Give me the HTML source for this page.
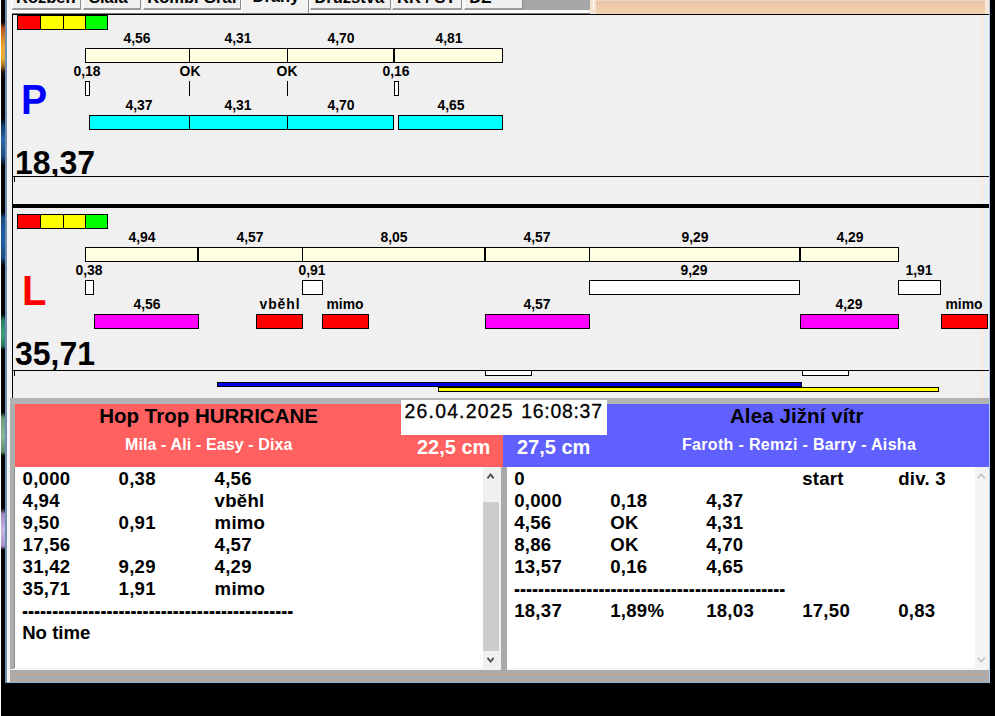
<!DOCTYPE html>
<html lang="cs">
<head>
<meta charset="utf-8">
<title>Flyball - Dráhy</title>
<style>
html,body{margin:0;padding:0;}
body{width:995px;height:716px;overflow:hidden;background:#000;position:relative;
 font-family:"Liberation Sans",sans-serif;font-weight:bold;}
div,span{position:absolute;box-sizing:border-box;}
.t{white-space:pre;}
.bar{border:1px solid #000;}
.tab{top:-6px;height:15.5px;background:#f0f0f0;border-right:1px solid #8c8c8c;border-bottom:2px solid #9a9a9a;border-left:1px solid #fff;}
</style>
</head>
<body>

<div style="left:0px;top:0px;width:1px;height:716px;background:#fff;"></div>
<div style="left:1px;top:0px;width:4px;height:683px;background:linear-gradient(180deg,#000 0px,#000 22px,#3a1408 24px,#b05020 28px,#d07828 36px,#e8a030 44px,#e8b038 58px,#a07020 66px,#201008 72px,#000 80px,#000 118px,#103a68 126px,#2868a8 140px,#1a4a80 156px,#000 166px,#000 212px,#184a88 218px,#2060a0 240px,#184a80 258px,#000 266px,#000 314px,#2a7a68 320px,#40a078 334px,#2a7060 346px,#000 350px,#000 412px,#6a9a7a 418px,#88b898 436px,#5a8a6a 452px,#000 456px,#000 508px,#a088c8 514px,#c8b8e0 530px,#a890c8 546px,#000 550px,#000 683px);"></div>
<div style="left:5px;top:0px;width:2px;height:683px;background:#6f8fb4;"></div>
<div style="left:7px;top:0px;width:983px;height:683px;background:#f4f4f4;"></div>
<div style="left:5px;top:669px;width:985px;height:14px;background:linear-gradient(180deg,#f4f4f4 0,#f4f4f4 1px,#a9abad 1px,#a9abad 4px,#b5a89c 4px,#b5a89c 7px,#a8acb0 7px,#a8acb0 10px,#b3aaa0 10px,#b3aaa0 12.5px,#8fb4d8 12.5px,#8fb4d8 14px);"></div>
<div style="left:5px;top:669px;width:2px;height:14px;background:#6f8fb4;"></div>
<div style="left:7px;top:669px;width:3px;height:13px;background:#f4f4f4;"></div>
<div style="left:990px;top:0px;width:5px;height:716px;background:#000;"></div>
<div style="left:7px;top:0px;width:583px;height:10px;background:#f6f6f6;"></div>
<div style="left:7px;top:10px;width:983px;height:3px;background:#fbfbfb;"></div>
<div style="left:522px;top:0px;width:68px;height:10px;background:#a6a6a6;"></div>
<div style="left:590px;top:0px;width:6px;height:13px;background:#f6e2cc;"></div>
<div style="left:593px;top:0px;width:1px;height:10px;background:#fff;"></div>
<div style="left:596px;top:0px;width:394px;height:14px;background:linear-gradient(180deg,#f6e6d8 0,#e6c4a8 1.2px,#efcdac 7px,#f3d2b0 14px);"></div>
<div style="left:985px;top:0px;width:4px;height:14px;background:#f7e6d6;"></div>
<div class="tab" style="left:12px;width:69px;"></div>
<span class="t" style="top:-11px;font-size:16.5px;line-height:16.5px;color:#000;left:45.8px;transform:translateX(-50%);transform-origin:50% 0;">Rozběh</span>
<div class="tab" style="left:83px;width:58px;"></div>
<span class="t" style="top:-11px;font-size:16.5px;line-height:16.5px;color:#000;left:108.3px;transform:translateX(-50%);transform-origin:50% 0;">Siala</span>
<div class="tab" style="left:143px;width:98px;"></div>
<span class="t" style="top:-11px;font-size:16.5px;line-height:16.5px;color:#000;left:192.2px;transform:translateX(-50%);transform-origin:50% 0;">Kombi Graf</span>
<div class="tab" style="left:310px;width:81px;"></div>
<span class="t" style="top:-11px;font-size:16.5px;line-height:16.5px;color:#000;left:349.3px;transform:translateX(-50%);transform-origin:50% 0;">Družstva</span>
<div class="tab" style="left:392px;width:70px;"></div>
<span class="t" style="top:-11px;font-size:16.5px;line-height:16.5px;color:#000;left:426.3px;transform:translateX(-50%);transform-origin:50% 0;">KK / ST</span>
<div class="tab" style="left:464px;width:59px;"></div>
<span class="t" style="top:-11px;font-size:16.5px;line-height:16.5px;color:#000;left:480.3px;transform:translateX(-50%);transform-origin:50% 0;">DZ</span>
<div style="left:241px;top:-6px;width:68px;height:19px;background:#f2f2f2;border-left:1px solid #fff;border-right:1px solid #8c8c8c;"></div>
<span class="t" style="top:-12.4px;font-size:16.5px;line-height:16.5px;color:#000;left:276px;transform:translateX(-50%);transform-origin:50% 0;">Dráhy</span>
<div style="left:7px;top:13px;width:5px;height:1px;background:#fbfbfb;"></div>
<div style="left:12px;top:13px;width:578px;height:1px;background:#7a7a7a;"></div>
<div style="left:12px;top:14px;width:978px;height:384px;background:#f0f0f0;"></div>
<div style="left:981px;top:15px;width:3px;height:383px;background:#f5ece4;"></div>
<div style="left:984px;top:15px;width:3px;height:383px;background:#e6f0fa;"></div>
<div style="left:987px;top:15px;width:3px;height:383px;background:#f6eee8;"></div>
<div style="left:12px;top:14px;width:978px;height:1px;background:#000;"></div>
<div style="left:12px;top:14px;width:1px;height:384px;background:#000;"></div>
<div style="left:12px;top:176px;width:978px;height:1px;background:#000;"></div>
<div style="left:14px;top:177px;width:1px;height:5px;background:#000;"></div>
<div style="left:12px;top:204px;width:978px;height:4px;background:#000;"></div>
<div style="left:12px;top:370px;width:978px;height:1px;background:#000;"></div>
<div style="left:14px;top:371px;width:1px;height:5px;background:#000;"></div>
<div class="bar" style="left:17px;top:15px;width:24px;height:15px;background:#ff0000"></div>
<div class="bar" style="left:40px;top:15px;width:24px;height:15px;background:#ffff00"></div>
<div class="bar" style="left:63px;top:15px;width:23px;height:15px;background:#ffff00"></div>
<div class="bar" style="left:85px;top:15px;width:23px;height:15px;background:#00ff00"></div>
<div class="bar" style="left:85px;top:48px;width:418px;height:15px;background:#ffffe1"></div>
<span class="t" style="top:30px;font-size:15.2px;line-height:15.2px;color:#000;left:137.0px;transform:translateX(-50%) scaleX(0.915);transform-origin:50% 0;">4,56</span>
<span class="t" style="top:30px;font-size:15.2px;line-height:15.2px;color:#000;left:238.0px;transform:translateX(-50%) scaleX(0.915);transform-origin:50% 0;">4,31</span>
<span class="t" style="top:30px;font-size:15.2px;line-height:15.2px;color:#000;left:340.5px;transform:translateX(-50%) scaleX(0.915);transform-origin:50% 0;">4,70</span>
<span class="t" style="top:30px;font-size:15.2px;line-height:15.2px;color:#000;left:448.5px;transform:translateX(-50%) scaleX(0.915);transform-origin:50% 0;">4,81</span>
<div style="left:189px;top:48px;width:1px;height:15px;background:#000;"></div>
<div style="left:287px;top:48px;width:1px;height:15px;background:#000;"></div>
<div style="left:393px;top:48px;width:2px;height:15px;background:#000;"></div>
<span class="t" style="top:63px;font-size:15.2px;line-height:15.2px;color:#000;left:87px;transform:translateX(-50%) scaleX(0.915);transform-origin:50% 0;">0,18</span>
<span class="t" style="top:63px;font-size:15.2px;line-height:15.2px;color:#000;left:189.5px;transform:translateX(-50%) scaleX(0.915);transform-origin:50% 0;">OK</span>
<span class="t" style="top:63px;font-size:15.2px;line-height:15.2px;color:#000;left:287px;transform:translateX(-50%) scaleX(0.915);transform-origin:50% 0;">OK</span>
<span class="t" style="top:63px;font-size:15.2px;line-height:15.2px;color:#000;left:396.3px;transform:translateX(-50%) scaleX(0.915);transform-origin:50% 0;">0,16</span>
<div class="bar" style="left:85px;top:81px;width:5px;height:15px;background:#fff"></div>
<div style="left:189px;top:81px;width:1px;height:15px;background:#000;"></div>
<div style="left:287px;top:81px;width:1px;height:15px;background:#000;"></div>
<div class="bar" style="left:394px;top:81px;width:5px;height:15px;background:#fff"></div>
<div class="bar" style="left:89px;top:115px;width:305px;height:15px;background:#00ffff"></div>
<div style="left:189px;top:115px;width:1px;height:15px;background:#000;"></div>
<div style="left:287px;top:115px;width:1px;height:15px;background:#000;"></div>
<div class="bar" style="left:398px;top:115px;width:105px;height:15px;background:#00ffff"></div>
<span class="t" style="top:97px;font-size:15.2px;line-height:15.2px;color:#000;left:139px;transform:translateX(-50%) scaleX(0.915);transform-origin:50% 0;">4,37</span>
<span class="t" style="top:97px;font-size:15.2px;line-height:15.2px;color:#000;left:238px;transform:translateX(-50%) scaleX(0.915);transform-origin:50% 0;">4,31</span>
<span class="t" style="top:97px;font-size:15.2px;line-height:15.2px;color:#000;left:340.5px;transform:translateX(-50%) scaleX(0.915);transform-origin:50% 0;">4,70</span>
<span class="t" style="top:97px;font-size:15.2px;line-height:15.2px;color:#000;left:450.5px;transform:translateX(-50%) scaleX(0.915);transform-origin:50% 0;">4,65</span>
<span class="t" style="top:78px;font-size:43px;line-height:43px;color:#0000ff;left:20.8px;transform:scaleX(0.91);transform-origin:0 0;">P</span>
<div style="left:13px;top:140px;width:300px;height:36px;overflow:hidden;">
<span class="t" style="top:5px;font-size:34px;line-height:34px;color:#000;left:2.4px;transform:scaleX(0.94);transform-origin:0 0;">18,37</span>
</div>
<div class="bar" style="left:17px;top:214px;width:24px;height:15px;background:#ff0000"></div>
<div class="bar" style="left:40px;top:214px;width:24px;height:15px;background:#ffff00"></div>
<div class="bar" style="left:63px;top:214px;width:23px;height:15px;background:#ffff00"></div>
<div class="bar" style="left:85px;top:214px;width:23px;height:15px;background:#00ff00"></div>
<div class="bar" style="left:85px;top:247px;width:814px;height:15px;background:#ffffe1"></div>
<span class="t" style="top:229px;font-size:15.2px;line-height:15.2px;color:#000;left:141.5px;transform:translateX(-50%) scaleX(0.915);transform-origin:50% 0;">4,94</span>
<span class="t" style="top:229px;font-size:15.2px;line-height:15.2px;color:#000;left:250.0px;transform:translateX(-50%) scaleX(0.915);transform-origin:50% 0;">4,57</span>
<span class="t" style="top:229px;font-size:15.2px;line-height:15.2px;color:#000;left:393.5px;transform:translateX(-50%) scaleX(0.915);transform-origin:50% 0;">8,05</span>
<span class="t" style="top:229px;font-size:15.2px;line-height:15.2px;color:#000;left:537.0px;transform:translateX(-50%) scaleX(0.915);transform-origin:50% 0;">4,57</span>
<span class="t" style="top:229px;font-size:15.2px;line-height:15.2px;color:#000;left:694.5px;transform:translateX(-50%) scaleX(0.915);transform-origin:50% 0;">9,29</span>
<span class="t" style="top:229px;font-size:15.2px;line-height:15.2px;color:#000;left:849.5px;transform:translateX(-50%) scaleX(0.915);transform-origin:50% 0;">4,29</span>
<div style="left:197px;top:247px;width:2px;height:15px;background:#000;"></div>
<div style="left:302px;top:247px;width:1px;height:15px;background:#000;"></div>
<div style="left:484px;top:247px;width:2px;height:15px;background:#000;"></div>
<div style="left:589px;top:247px;width:1px;height:15px;background:#000;"></div>
<div style="left:799px;top:247px;width:2px;height:15px;background:#000;"></div>
<span class="t" style="top:262px;font-size:15.2px;line-height:15.2px;color:#000;left:89px;transform:translateX(-50%) scaleX(0.915);transform-origin:50% 0;">0,38</span>
<span class="t" style="top:262px;font-size:15.2px;line-height:15.2px;color:#000;left:311.8px;transform:translateX(-50%) scaleX(0.915);transform-origin:50% 0;">0,91</span>
<span class="t" style="top:262px;font-size:15.2px;line-height:15.2px;color:#000;left:694px;transform:translateX(-50%) scaleX(0.915);transform-origin:50% 0;">9,29</span>
<span class="t" style="top:262px;font-size:15.2px;line-height:15.2px;color:#000;left:919.3px;transform:translateX(-50%) scaleX(0.915);transform-origin:50% 0;">1,91</span>
<div class="bar" style="left:85px;top:280px;width:9px;height:15px;background:#fff"></div>
<div class="bar" style="left:302px;top:280px;width:21px;height:15px;background:#fff"></div>
<div class="bar" style="left:589px;top:280px;width:211px;height:15px;background:#fff"></div>
<div class="bar" style="left:898px;top:280px;width:43px;height:15px;background:#fff"></div>
<div class="bar" style="left:94px;top:314px;width:105px;height:15px;background:#ff00ff"></div>
<div class="bar" style="left:256px;top:314px;width:47px;height:15px;background:#ff0000"></div>
<div class="bar" style="left:322px;top:314px;width:47px;height:15px;background:#ff0000"></div>
<div class="bar" style="left:485px;top:314px;width:105px;height:15px;background:#ff00ff"></div>
<div class="bar" style="left:800px;top:314px;width:99px;height:15px;background:#ff00ff"></div>
<div class="bar" style="left:941px;top:314px;width:47px;height:15px;background:#ff0000"></div>
<span class="t" style="top:296px;font-size:15.2px;line-height:15.2px;color:#000;left:146.5px;transform:translateX(-50%) scaleX(0.915);transform-origin:50% 0;">4,56</span>
<span class="t" style="top:296px;font-size:15.2px;line-height:15.2px;color:#000;letter-spacing:1.0px;left:279.6px;transform:translateX(-50%) scaleX(0.915);transform-origin:50% 0;">vběhl</span>
<span class="t" style="top:296px;font-size:15.2px;line-height:15.2px;color:#000;left:344.8px;transform:translateX(-50%) scaleX(0.915);transform-origin:50% 0;">mimo</span>
<span class="t" style="top:296px;font-size:15.2px;line-height:15.2px;color:#000;left:537px;transform:translateX(-50%) scaleX(0.915);transform-origin:50% 0;">4,57</span>
<span class="t" style="top:296px;font-size:15.2px;line-height:15.2px;color:#000;left:849px;transform:translateX(-50%) scaleX(0.915);transform-origin:50% 0;">4,29</span>
<span class="t" style="top:296px;font-size:15.2px;line-height:15.2px;color:#000;left:963.6px;transform:translateX(-50%) scaleX(0.915);transform-origin:50% 0;">mimo</span>
<span class="t" style="top:269px;font-size:43px;line-height:43px;color:#ff0000;left:21.6px;transform:scaleX(0.93);transform-origin:0 0;">L</span>
<span class="t" style="top:336px;font-size:34px;line-height:34px;color:#000;left:15.4px;transform:scaleX(0.94);transform-origin:0 0;">35,71</span>
<div class="bar" style="left:485px;top:370px;width:47px;height:6px;background:#fff"></div>
<div class="bar" style="left:802px;top:370px;width:47px;height:6px;background:#fff"></div>
<div class="bar" style="left:217px;top:382px;width:585px;height:5px;background:#0000e6"></div>
<div class="bar" style="left:438px;top:387px;width:501px;height:5px;background:#ffff00"></div>
<div style="left:10px;top:398px;width:980px;height:271px;background:#adadad;"></div>
<div style="left:10px;top:398px;width:980px;height:6px;background:#b2b2b2;"></div>
<div style="left:15px;top:404px;width:488px;height:63px;background:#ff6060;"></div>
<div style="left:503px;top:404px;width:487px;height:63px;background:#6060ff;"></div>
<span class="t" style="top:406px;font-size:20.5px;line-height:20.5px;color:#000;left:208.6px;transform:translateX(-50%);transform-origin:50% 0;">Hop Trop HURRICANE</span>
<span class="t" style="top:437px;font-size:16px;line-height:16px;color:#fff;letter-spacing:0.12px;left:208.8px;transform:translateX(-50%);transform-origin:50% 0;">Mila - Ali - Easy - Dixa</span>
<span class="t" style="top:406px;font-size:20.5px;line-height:20.5px;color:#000;letter-spacing:0.1px;left:796.8px;transform:translateX(-50%);transform-origin:50% 0;">Alea Jižní vítr</span>
<span class="t" style="top:437px;font-size:16px;line-height:16px;color:#fff;letter-spacing:0.33px;left:799.1px;transform:translateX(-50%);transform-origin:50% 0;">Faroth - Remzi - Barry - Aisha</span>
<span class="t" style="top:437px;font-size:20.8px;line-height:20.8px;color:#fff;left:416.6px;transform:scaleX(0.96);transform-origin:0 0;">22,5 cm</span>
<span class="t" style="top:437px;font-size:20.8px;line-height:20.8px;color:#fff;left:517.1px;transform:scaleX(0.96);transform-origin:0 0;">27,5 cm</span>
<div style="left:401px;top:399.5px;width:206.3px;height:35px;background:#fff;"></div>
<span class="t" style="top:402px;font-size:19.4px;line-height:19.4px;color:#000;font-weight:normal;letter-spacing:1.2px;left:404.6px;-webkit-text-stroke:0.3px #000;">26.04.2025</span>
<span class="t" style="top:402px;font-size:19.4px;line-height:19.4px;color:#000;font-weight:normal;letter-spacing:0.75px;left:521.2px;-webkit-text-stroke:0.3px #000;">16:08:37</span>
<div style="left:14px;top:466.5px;width:487px;height:202.5px;background:#fff;border-left:1px solid #8e8e8e;"></div>
<div style="left:506.5px;top:466.5px;width:483.5px;height:202.5px;background:#fff;"></div>
<div style="left:14px;top:668px;width:976px;height:1.5px;background:#f4f4f4;"></div>
<div style="left:501px;top:466.5px;width:5.5px;height:204px;background:#a9a9a9;"></div>
<div style="left:483px;top:467px;width:17.5px;height:201.5px;background:#f0f0f0;"></div>
<div style="left:483px;top:501.5px;width:15.5px;height:149px;background:#cdcdcd;"></div>
<div style="left:974.5px;top:467px;width:15px;height:201.5px;background:#f3f3f3;"></div>
<svg style="position:absolute;left:483px;top:467px" width="18" height="202" viewBox="0 0 18 202">
<path d="M4.5 11.4 L7.6 7.6 L10.7 11.4" fill="none" stroke="#505050" stroke-width="1.9"/>
<path d="M4.5 190.8 L7.6 194.6 L10.7 190.8" fill="none" stroke="#505050" stroke-width="1.9"/>
</svg>
<svg style="position:absolute;left:974px;top:467px" width="16" height="202" viewBox="0 0 16 202">
<path d="M3.8 11.2 L7.3 7.2 L10.8 11.2" fill="none" stroke="#bdbdbd" stroke-width="1.4"/>
<path d="M3.8 190.8 L7.3 194.8 L10.8 190.8" fill="none" stroke="#bdbdbd" stroke-width="1.4"/>
</svg>
<span class="t" style="top:470px;font-size:18.6px;line-height:18.6px;color:#000;letter-spacing:0.25px;left:22.6px;">0,000</span>
<span class="t" style="top:470px;font-size:18.6px;line-height:18.6px;color:#000;letter-spacing:0.25px;left:118.6px;">0,38</span>
<span class="t" style="top:470px;font-size:18.6px;line-height:18.6px;color:#000;letter-spacing:0.25px;left:214.6px;">4,56</span>
<span class="t" style="top:492px;font-size:18.6px;line-height:18.6px;color:#000;letter-spacing:0.25px;left:22.6px;">4,94</span>
<span class="t" style="top:492px;font-size:18.6px;line-height:18.6px;color:#000;letter-spacing:0.25px;left:214.6px;">vběhl</span>
<span class="t" style="top:514px;font-size:18.6px;line-height:18.6px;color:#000;letter-spacing:0.25px;left:22.6px;">9,50</span>
<span class="t" style="top:514px;font-size:18.6px;line-height:18.6px;color:#000;letter-spacing:0.25px;left:118.6px;">0,91</span>
<span class="t" style="top:514px;font-size:18.6px;line-height:18.6px;color:#000;letter-spacing:0.25px;left:214.6px;">mimo</span>
<span class="t" style="top:536px;font-size:18.6px;line-height:18.6px;color:#000;letter-spacing:0.25px;left:22.6px;">17,56</span>
<span class="t" style="top:536px;font-size:18.6px;line-height:18.6px;color:#000;letter-spacing:0.25px;left:214.6px;">4,57</span>
<span class="t" style="top:558px;font-size:18.6px;line-height:18.6px;color:#000;letter-spacing:0.25px;left:22.6px;">31,42</span>
<span class="t" style="top:558px;font-size:18.6px;line-height:18.6px;color:#000;letter-spacing:0.25px;left:118.6px;">9,29</span>
<span class="t" style="top:558px;font-size:18.6px;line-height:18.6px;color:#000;letter-spacing:0.25px;left:214.6px;">4,29</span>
<span class="t" style="top:580px;font-size:18.6px;line-height:18.6px;color:#000;letter-spacing:0.25px;left:22.6px;">35,71</span>
<span class="t" style="top:580px;font-size:18.6px;line-height:18.6px;color:#000;letter-spacing:0.25px;left:118.6px;">1,91</span>
<span class="t" style="top:580px;font-size:18.6px;line-height:18.6px;color:#000;letter-spacing:0.25px;left:214.6px;">mimo</span>
<span class="t" style="top:600px;font-size:23px;line-height:23px;color:#000;left:22.4px;transform:scaleX(0.7873);transform-origin:0 0;">---------------------------------------------</span>
<span class="t" style="top:624px;font-size:18.6px;line-height:18.6px;color:#000;left:22.2px;">No time</span>
<span class="t" style="top:470px;font-size:18.6px;line-height:18.6px;color:#000;letter-spacing:0.25px;left:514.2px;">0</span>
<span class="t" style="top:470px;font-size:18.6px;line-height:18.6px;color:#000;letter-spacing:0.25px;left:802.2px;">start</span>
<span class="t" style="top:470px;font-size:18.6px;line-height:18.6px;color:#000;letter-spacing:0.25px;left:898.2px;">div. 3</span>
<span class="t" style="top:492px;font-size:18.6px;line-height:18.6px;color:#000;letter-spacing:0.25px;left:514.2px;">0,000</span>
<span class="t" style="top:492px;font-size:18.6px;line-height:18.6px;color:#000;letter-spacing:0.25px;left:610.2px;">0,18</span>
<span class="t" style="top:492px;font-size:18.6px;line-height:18.6px;color:#000;letter-spacing:0.25px;left:706.2px;">4,37</span>
<span class="t" style="top:514px;font-size:18.6px;line-height:18.6px;color:#000;letter-spacing:0.25px;left:514.2px;">4,56</span>
<span class="t" style="top:514px;font-size:18.6px;line-height:18.6px;color:#000;letter-spacing:0.25px;left:610.2px;">OK</span>
<span class="t" style="top:514px;font-size:18.6px;line-height:18.6px;color:#000;letter-spacing:0.25px;left:706.2px;">4,31</span>
<span class="t" style="top:536px;font-size:18.6px;line-height:18.6px;color:#000;letter-spacing:0.25px;left:514.2px;">8,86</span>
<span class="t" style="top:536px;font-size:18.6px;line-height:18.6px;color:#000;letter-spacing:0.25px;left:610.2px;">OK</span>
<span class="t" style="top:536px;font-size:18.6px;line-height:18.6px;color:#000;letter-spacing:0.25px;left:706.2px;">4,70</span>
<span class="t" style="top:558px;font-size:18.6px;line-height:18.6px;color:#000;letter-spacing:0.25px;left:514.2px;">13,57</span>
<span class="t" style="top:558px;font-size:18.6px;line-height:18.6px;color:#000;letter-spacing:0.25px;left:610.2px;">0,16</span>
<span class="t" style="top:558px;font-size:18.6px;line-height:18.6px;color:#000;letter-spacing:0.25px;left:706.2px;">4,65</span>
<span class="t" style="top:578px;font-size:23px;line-height:23px;color:#000;left:514.0px;transform:scaleX(0.7873);transform-origin:0 0;">---------------------------------------------</span>
<span class="t" style="top:602px;font-size:18.6px;line-height:18.6px;color:#000;letter-spacing:0.25px;left:514.2px;">18,37</span>
<span class="t" style="top:602px;font-size:18.6px;line-height:18.6px;color:#000;letter-spacing:0.25px;left:610.2px;">1,89%</span>
<span class="t" style="top:602px;font-size:18.6px;line-height:18.6px;color:#000;letter-spacing:0.25px;left:706.2px;">18,03</span>
<span class="t" style="top:602px;font-size:18.6px;line-height:18.6px;color:#000;letter-spacing:0.25px;left:802.2px;">17,50</span>
<span class="t" style="top:602px;font-size:18.6px;line-height:18.6px;color:#000;letter-spacing:0.25px;left:898.2px;">0,83</span>
<div style="left:989px;top:0px;width:1px;height:683px;background:#a8cdf0;"></div>
<div style="left:1px;top:683px;width:994px;height:33px;background:#000;"></div>
</body>
</html>
